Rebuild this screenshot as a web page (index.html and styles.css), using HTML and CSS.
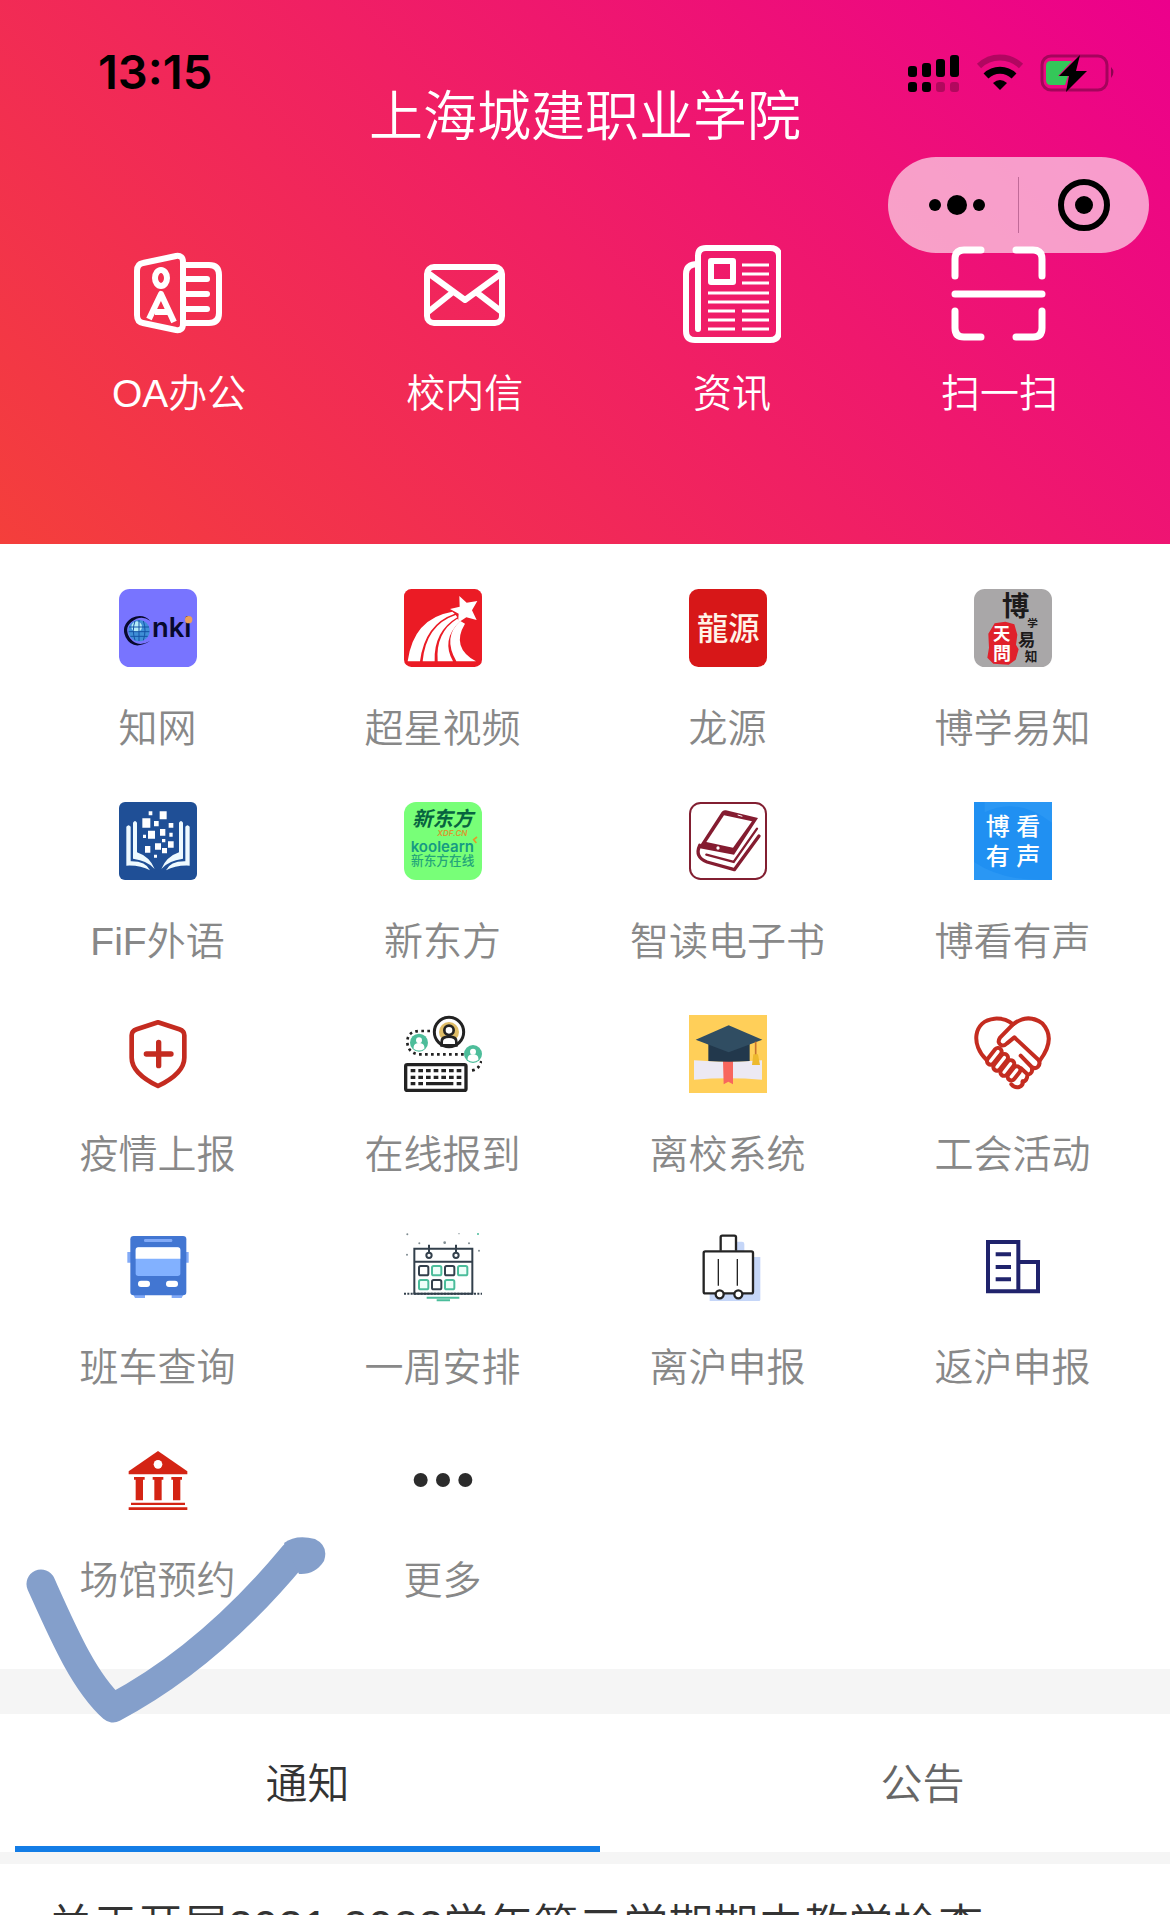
FILE: index.html
```html
<!DOCTYPE html>
<html lang="zh-CN">
<head>
    <meta charset="utf-8">
    <meta name="viewport" content="width=device-width, initial-scale=1">
    <title>上海城建职业学院</title>
    <link rel="stylesheet" href="styles.css">
</head>
<body>
    <header class="header">
        <div class="status-bar">
            <span class="time">13:15</span>
            <div class="status-icons">
                <svg width="52" height="38" viewBox="0 0 52 38">
                    <rect x="0" y="12" width="9" height="11" rx="3"/>
                    <rect x="14" y="9" width="9" height="14" rx="3"/>
                    <rect x="28" y="5" width="9" height="18" rx="3"/>
                    <rect x="42" y="1" width="9" height="22" rx="3"/>
                    <rect x="0" y="28" width="9" height="10" rx="3"/>
                    <rect x="14" y="28" width="9" height="10" rx="3"/>
                    <rect x="28" y="28" width="9" height="10" rx="3" opacity=".25"/>
                    <rect x="42" y="28" width="9" height="10" rx="3" opacity=".25"/>
                </svg>
                <svg width="48" height="38" viewBox="0 0 48 38">
                    <path d="M3 12a30 30 0 0 1 42 0" fill="none" stroke="#000" stroke-width="6" opacity=".25"/>
                    <path d="M10 22a20 20 0 0 1 28 0" fill="none" stroke="#000" stroke-width="7"/>
                    <path d="M24 36l-7-7q7-6 14 0z"/>
                </svg>
                <svg width="76" height="38" viewBox="0 0 76 38">
                    <rect x="2" y="2" width="65" height="34" rx="9" fill="none" stroke="#000" stroke-width="3" opacity=".3"/>
                    <path d="M71 13q5 5 0 11z" opacity=".4"/>
                    <path d="M11 7h21L18 22h10l-3 9H11q-5 0-5-5V12q0-5 5-5z" fill="#34c759"/>
                    <path d="M40 1L19 22h10l-3 16L47 17H36z"/>
                </svg>
            </div>
        </div>
        <h1 class="title">上海城建职业学院</h1>
        <div class="capsule">
            <button type="button" aria-label="更多操作">
                <svg width="66" height="54" viewBox="0 0 66 54">
                    <circle cx="15" cy="27" r="6"/>
                    <circle cx="37" cy="27" r="10"/>
                    <circle cx="59" cy="27" r="6"/>
                </svg>
            </button>
            <button type="button" aria-label="关闭">
                <svg width="54" height="54" viewBox="0 0 54 54">
                    <circle cx="27" cy="27" r="23" fill="none" stroke="#000" stroke-width="6"/>
                    <circle cx="27" cy="27" r="9"/>
                </svg>
            </button>
        </div>
        <nav class="quick">
            <a href="#oa">
                <svg class="line-icon" viewBox="0 0 98 98">
                    <path d="M13 18l33-7q7-1 7 6v62q0 7-7 6l-33-7q-6-1-6-8V26q0-7 6-8z"/>
                    <path d="M54 20h25q10 0 10 10v38q0 10-10 10H54M56 34h21M56 49h21M56 64h21" stroke-linecap="round"/>
                    <ellipse cx="31" cy="33" rx="6" ry="8"/>
                    <path d="M19 74l12-25 13 28M25 67h14"/>
                </svg>
                <span>OA办公</span>
            </a>
            <a href="#mail">
                <svg class="line-icon" viewBox="0 0 98 98">
                    <rect x="11" y="22" width="75" height="56" rx="7"/>
                    <path d="M12 28l37 27 37-27M12 67l25-20M86 67L60 47"/>
                </svg>
                <span>校内信</span>
            </a>
            <a href="#news">
                <svg class="line-icon" viewBox="0 0 98 98">
                    <path d="M15 84V11q0-8 8-8h64q9 0 9 8v75q0 9-9 9H12q-9 0-9-9V29q0-10 12-10" stroke-linecap="round"/>
                    <rect x="28" y="16" width="22" height="21"/>
                    <path d="M59 20h27M59 29h27M59 38h27M25 48h61M25 57h61M25 66h27M59 66h27M25 75h27M59 75h27M25 84h27M59 84h27" stroke-width="3"/>
                </svg>
                <span>资讯</span>
            </a>
            <a href="#scan">
                <svg class="line-icon" viewBox="0 0 98 98">
                    <path d="M5 31V14Q5 5 14 5h17M66 5h17q9 0 9 9v17M5 66v17q0 9 9 9h17M66 92h17q9 0 9-9V66M5 49h87" stroke-width="7" stroke-linecap="round"/>
                </svg>
                <span>扫一扫</span>
            </a>
        </nav>
    </header>

    <main>
        <div class="grid">
            <a href="#cnki">
                <svg viewBox="0 0 234 234">
                    <rect width="234" height="234" rx="32" fill="#7874ff"/>
                    <circle cx="60" cy="125" r="32" fill="#3f8fd6"/>
                    <circle cx="53" cy="113" r="16" fill="#b5ecf8"/>
                    <path d="M30 114h60M29 128h62M34 142h52M48 96q-10 28 0 58M60 93v63M73 96q10 28 0 58" stroke="#1553a5" stroke-width="3" fill="none"/>
                    <path d="M94 96Q72 72 38 87 4 110 20 145 42 187 93 156 56 177 33 148 14 118 37 99 66 75 94 96z" fill="#07092d"/>
                    <text x="99" y="143" class="latin" font-size="82" fill="#07092d">nki</text>
                    <circle cx="209" cy="92" r="11" fill="#eba05a"/>
                </svg>
                <span>知网</span>
            </a>
            <a href="#chaoxing">
                <svg viewBox="0 0 234 234">
                    <rect width="234" height="234" rx="22" fill="#eb1b25"/>
                    <g fill="#fff">
                        <path d="M166 21l22 20 32-5-16 28 14 29-31-8-25 16 2-27-26-14 29-7z"/>
                        <path d="M11 217Q28 88 145 68l7 6Q62 105 48 217z"/>
                        <path d="M56 217Q66 108 155 78l5 7Q88 128 92 217z"/>
                        <path d="M101 217Q94 130 160 89l7 9Q111 152 147 217z"/>
                        <path d="M157 217Q115 144 169 96l14 8Q140 175 216 217z"/>
                    </g>
                </svg>
                <span>超星视频</span>
            </a>
            <a href="#longyuan">
                <svg viewBox="0 0 234 234">
                    <rect width="234" height="234" rx="28" fill="#d71718"/>
                    <text x="118" y="153" font-size="94" font-weight="500" text-anchor="middle" fill="#fff3e8">龍源</text>
                </svg>
                <span>龙源</span>
            </a>
            <a href="#boxue">
                <svg viewBox="0 0 234 234">
                    <rect width="234" height="234" rx="32" fill="#a9a7a8"/>
                    <path d="M62 103l32-5 27 8 9 31-4 30 8 14-9 31-21 15-46-3-18-18 5-30-2-42z" fill="#e0202b"/>
                    <text x="57" y="152" font-size="52" font-weight="700" fill="#fff">天</text>
                    <text x="57" y="213" font-size="54" font-weight="700" fill="#fff">問</text>
                    <g fill="#1c1a1b" font-weight="700">
                        <text x="84" y="82" font-size="82">博</text>
                        <text x="160" y="115" font-size="32">学</text>
                        <text x="132" y="172" font-size="52">易</text>
                        <text x="152" y="216" font-size="38">知</text>
                    </g>
                </svg>
                <span>博学易知</span>
            </a>

            <a href="#fif">
                <svg viewBox="0 0 234 234">
                    <rect width="234" height="234" rx="18" fill="#1f4f96"/>
                    <path d="M89 28h11v12H89zM122 28h21v24h-21zM70 49h24v28H70zM105 57h14v16h-14zM149 63h14v14h-14zM87 86h21v24H87zM123 81h16v20h-16zM72 98h9v10h-9zM151 92h10v12h-10zM129 111h10v10h-10zM78 132h16v20H78zM108 124h18v19h-18zM147 118h17v19h-17zM129 138h15v16h-15zM105 158h9v9h-9z" fill="#fff"/>
                    <g fill="#eefaff">
                        <path d="M22 74q7-9 13 0v104q45-1 58 27-29-16-71-14z"/>
                        <path d="M42 62q6-10 12 0v89q38 13 53 50-20-25-65-31z"/>
                        <path d="M212 74q-7-9-13 0v104q-45-1-58 27 29-16 71-14z"/>
                        <path d="M192 62q-6-10-12 0v89q-38 13-53 50 20-25 65-31z"/>
                    </g>
                </svg>
                <span>FiF外语</span>
            </a>
            <a href="#xdf">
                <svg viewBox="0 0 234 234">
                    <rect width="234" height="234" rx="36" fill="#78ff78"/>
                    <text x="116" y="73" font-size="61" font-weight="700" font-style="italic" text-anchor="middle" fill="#07633f">新东方</text>
                    <text x="145" y="101" class="latin" font-size="24" font-style="italic" text-anchor="middle" fill="#d89a2e">XDF.CN</text>
                    <text x="20" y="149" class="latin" font-size="45" fill="#159a83">koolearn</text>
                    <path d="M219 105l-10 8 8 10" fill="none" stroke="#e59a28" stroke-width="5"/>
                    <text x="116" y="190" font-size="38" font-weight="500" text-anchor="middle" fill="#24a579">新东方在线</text>
                </svg>
                <span>新东方</span>
            </a>
            <a href="#ebook">
                <svg viewBox="0 0 234 234">
                    <rect x="3" y="3" width="228" height="228" rx="32" fill="#fff" stroke="#821f31" stroke-width="6"/>
                    <path d="M98 30q5-7 13-5l96 23-72 110-107-20z" fill="#841c30"/>
                    <path d="M105 40l84 18-57 79-80-17z" fill="#fff"/>
                    <path d="M32 130q-16 35 22 50l82 23 74-101" fill="none" stroke="#841c30" stroke-width="10" stroke-linecap="round" stroke-linejoin="round"/>
                    <path d="M204 80l-70 100-82-22" fill="none" stroke="#841c30" stroke-width="7" stroke-linecap="round"/>
                    <path d="M146 39l14 4" stroke="#fff" stroke-width="3"/>
                    <circle cx="87" cy="138" r="5" fill="#fff"/>
                </svg>
                <span>智读电子书</span>
            </a>
            <a href="#bokan">
                <svg viewBox="0 0 234 234">
                    <path d="M0 0h234v234H0z" fill="#2090f2"/>
                    <path d="M32 0h202v62Q126-18 32 31zM0 180q80 54 200 54H0z" fill="#2a97f4"/>
                    <g fill="#fff" font-size="72" font-weight="500">
                        <text x="35" y="98">博</text>
                        <text x="127" y="98">看</text>
                        <text x="35" y="190">有</text>
                        <text x="127" y="190">声</text>
                    </g>
                </svg>
                <span>博看有声</span>
            </a>

            <a href="#health">
                <svg viewBox="0 0 234 234">
                    <g fill="none" stroke="#c42b20" stroke-width="14" stroke-linecap="round" stroke-linejoin="round">
                        <path d="M117 22l-64 21q-15 5-15 18v67c0 38 38 65 79 85 41-20 79-47 79-85V61q0-13-15-18z"/>
                        <path d="M119 82v70M82 117h74" stroke-width="16"/>
                    </g>
                </svg>
                <span>疫情上报</span>
            </a>
            <a href="#checkin">
                <svg viewBox="0 0 234 234">
                    <path d="M78 48H45Q10 50 10 80t30 38h140M204 166q22-3 28-28" fill="none" stroke="#222" stroke-width="8" stroke-dasharray="8 10"/>
                    <circle cx="135" cy="51" r="30" fill="#dfbd67"/>
                    <circle cx="135" cy="51" r="44" fill="none" stroke="#222" stroke-width="9"/>
                    <circle cx="135" cy="46" r="14" fill="#fff" stroke="#222" stroke-width="8"/>
                    <path d="M113 91V80q0-15 22-15t22 15v11z" fill="#fff" stroke="#222" stroke-width="8"/>
                    <g fill="#4dbd9a">
                        <circle cx="45" cy="83" r="27"/>
                        <circle cx="207" cy="117" r="27"/>
                    </g>
                    <g fill="#fff">
                        <circle cx="45" cy="76" r="9"/>
                        <path d="M29 101V95q2-11 16-11t16 11v6q-16 11-32 0z"/>
                        <circle cx="207" cy="110" r="9"/>
                        <path d="M191 135v-6q2-11 16-11t16 11v6q-16 11-32 0z"/>
                    </g>
                    <rect x="5" y="149" width="181" height="77" rx="5" fill="#fff" stroke="#222" stroke-width="10"/>
                    <path d="M20 167h152M20 187h152" stroke="#222" stroke-width="10" stroke-dasharray="14 9"/>
                    <path d="M20 206h14M43 206h14M66 206h82M158 206h14" stroke="#222" stroke-width="10"/>
                </svg>
                <span>在线报到</span>
            </a>
            <a href="#leave">
                <svg viewBox="0 0 234 234">
                    <path d="M0 0h234v234H0z" fill="#ffcf59"/>
                    <path d="M15 136q102 8 204 0v58q-102-8-204 0z" fill="#ece9f3"/>
                    <path d="M102 138h30v70l-14-8-14 8z" fill="#f8665d"/>
                    <path d="M58 80h124v58q-62 4-124 0z" fill="#22384c"/>
                    <path d="M119 31l101 43-101 38L20 74z" fill="#304d62"/>
                    <path d="M200 80v40" stroke="#c8742e" stroke-width="5"/>
                    <path d="M193 118h14l6 32h-24z" fill="#edb92e"/>
                </svg>
                <span>离校系统</span>
            </a>
            <a href="#union">
                <svg viewBox="0 0 234 234">
                    <g fill="none" stroke="#c42c20" stroke-width="12" stroke-linecap="round" stroke-linejoin="round">
                        <path d="M38 135C-10 91-3 17 62 11q32-2 55 17 44-34 88-3 42 46-7 111"/>
                        <path d="M117 28L78 68q-10 16 5 23 8 2 16-6l22-18 72 67q8 12-2 22-8 7-18 0l-33-34M173 156q5 20-11 23l-22-20M160 181q0 16-14 20"/>
                        <rect x="50" y="95" width="22" height="58" rx="11" transform="rotate(38 61 124)"/>
                        <rect x="69" y="113" width="22" height="58" rx="11" transform="rotate(38 80 142)"/>
                        <rect x="89" y="132" width="22" height="54" rx="11" transform="rotate(38 100 159)"/>
                        <rect x="109" y="151" width="22" height="48" rx="11" transform="rotate(38 120 175)"/>
                        <path d="M112 208q10 12 24 8 12-5 10-17"/>
                    </g>
                </svg>
                <span>工会活动</span>
            </a>

            <a href="#bus">
                <svg viewBox="0 0 234 234">
                    <path d="M25 72h184v32H25zM42 198h36v12H48zM158 198h36l-6 12h-30z" fill="#82aaf7"/>
                    <rect x="34" y="24" width="168" height="178" rx="10" fill="#4276d2"/>
                    <rect x="50" y="58" width="134" height="86" rx="8" fill="#82b1ff"/>
                    <path d="M50 92V66q0-8 8-8h118q8 0 8 8v26z" fill="#fff"/>
                    <rect x="75" y="33" width="85" height="9" rx="4" fill="#82aaf7"/>
                    <rect x="57" y="158" width="36" height="19" rx="9" fill="#fff"/>
                    <rect x="141" y="158" width="36" height="19" rx="9" fill="#fff"/>
                </svg>
                <span>班车查询</span>
            </a>
            <a href="#week">
                <svg viewBox="0 0 234 234">
                    <g fill="none" stroke="#33404c" stroke-width="6">
                        <path d="M31 197V62h174v135M31 101h174"/>
                        <path d="M0 197h234" stroke-dasharray="6 4"/>
                        <path d="M28 197h180"/>
                        <circle cx="75" cy="82" r="8"/>
                        <circle cx="156" cy="82" r="8"/>
                        <path d="M75 50v24M156 50v24"/>
                        <rect x="45" y="114" width="28" height="28" rx="5"/>
                        <rect x="123" y="114" width="28" height="28" rx="5"/>
                        <rect x="84" y="156" width="28" height="28" rx="5"/>
                    </g>
                    <g fill="#edfff9" stroke="#4bbd9b" stroke-width="6">
                        <rect x="84" y="114" width="28" height="28" rx="5"/>
                        <rect x="162" y="114" width="28" height="28" rx="5"/>
                        <rect x="45" y="156" width="28" height="28" rx="5"/>
                        <rect x="123" y="156" width="28" height="28" rx="5"/>
                        <path d="M68 209h98M98 217h40"/>
                    </g>
                    <g fill="#7f8c91">
                        <circle cx="10" cy="19" r="3"/>
                        <circle cx="46" cy="46" r="3"/>
                        <circle cx="122" cy="44" r="4"/>
                        <circle cx="195" cy="46" r="3"/>
                        <circle cx="9" cy="80" r="3"/>
                        <circle cx="225" cy="68" r="3"/>
                        <circle cx="222" cy="18" r="3" fill="#4bbd9b"/>
                        <circle cx="165" cy="17" r="2"/>
                    </g>
                </svg>
                <span>一周安排</span>
            </a>
            <a href="#outgoing">
                <svg viewBox="0 0 234 234">
                    <path d="M62 87h152v128q0 4-4 4H62zM118 48q0-7 8-7h33q7 0 7 7v30h-48z" fill="#c5d6f8"/>
                    <g fill="#fff" stroke="#242424" stroke-width="7">
                        <path d="M95 68V28q0-5 5-5h36q5 0 5 5v40"/>
                        <rect x="44" y="70" width="148" height="126" rx="5"/>
                        <path d="M88 93v80M145 93v80" stroke-width="4"/>
                        <circle cx="92" cy="199" r="12"/>
                        <circle cx="148" cy="199" r="12"/>
                    </g>
                </svg>
                <span>离沪申报</span>
            </a>
            <a href="#return">
                <svg viewBox="0 0 234 234">
                    <path d="M42 42h91v148H42zM133 102h59v88h-59zM65 79h46M65 117h46M65 154h46" fill="none" stroke="#20236c" stroke-width="12"/>
                </svg>
                <span>返沪申报</span>
            </a>

            <a href="#venue" class="venue">
                <svg viewBox="0 0 234 234">
                    <g fill="#d42414">
                        <path d="M117 30l88 61v9H29v-9z"/>
                        <path d="M45 108h32v8h-5v62H50v-62h-5zM101 108h32v8h-5v62h-22v-62h-5zM157 108h32v8h-5v62h-22v-62h-5zM36 185h162v7H36zM29 199h176v8H29z"/>
                    </g>
                    <circle cx="117" cy="70" r="13" fill="#fff"/>
                </svg>
                <span>场馆预约</span>
                <!-- hand-drawn tick over the venue entry -->
                <svg class="tick" viewBox="0 0 310 200">
                    <path d="M20 49C42 98 63 147 92 173 160 137 220 84 273 20" fill="none" stroke="#849fcb" stroke-width="29" stroke-linecap="round" stroke-linejoin="round"/>
                    <path d="M263 8q12-9 31-4 14 7 9 22-9 14-25 13z" fill="#849fcb"/>
                </svg>
            </a>
            <a href="#more">
                <svg viewBox="0 0 234 234">
                    <g fill="#2c2c2c">
                        <circle cx="50" cy="117" r="21"/>
                        <circle cx="117" cy="117" r="21"/>
                        <circle cx="184" cy="117" r="21"/>
                    </g>
                </svg>
                <span>更多</span>
            </a>
        </div>

        <div class="tabs">
            <button type="button" class="tab active">通知</button>
            <button type="button" class="tab">公告</button>
        </div>
        <ul class="list">
            <li><a href="#notice">关于开展2021-2022学年第二学期期中教学检查</a></li>
        </ul>
    </main>
</body>
</html>
```
FILE: styles.css
```css
* {
    box-sizing: border-box;
}

body {
    margin: 0;
    height: 100vh;
    overflow: hidden;
    background-color: #fff;
    font-family: "Liberation Sans", "Noto Sans CJK SC", sans-serif;
    font-weight: 350;
}

a {
    color: inherit;
    text-decoration: none;
}

button {
    border: 0;
    padding: 0;
    background: none;
    font: inherit;
}

svg {
    display: block;
}

.latin {
    font-family: Inter, sans-serif;
    font-weight: 600;
}

/* header */
.header {
    position: relative;
    padding: 54px 0 119px;
    background-image: linear-gradient(45deg, #f43f3b, #ec008c);
    color: #fff;
}

.status-bar {
    display: flex;
    justify-content: space-between;
    height: 36px;
    padding: 0 54px 0 98px;
    color: #000;
}

.time {
    font-family: Inter, sans-serif;
    font-size: 47px;
    font-weight: 600;
    line-height: 36px;
}

.status-icons {
    display: flex;
    gap: 16px;
}

.title {
    margin: 0;
    font-size: 54px;
    font-weight: 350;
    line-height: 54px;
    text-align: center;
}

.capsule {
    position: absolute;
    top: 157px;
    right: 21px;
    display: flex;
    align-items: center;
    width: 261px;
    height: 96px;
    border-radius: 48px;
    background-color: rgba(255, 255, 255, .6);
}

.capsule button {
    flex: 1;
    display: flex;
    justify-content: center;
    align-items: center;
    height: 56px;
}

.capsule button + button {
    border-left: 1px solid #c06a98;
}

.quick {
    position: relative;
    display: flex;
    justify-content: space-around;
    padding: 101px 32px 0;
}

.quick a,
.grid a {
    display: flex;
    flex-direction: column;
    align-items: center;
    font-size: 39px;
    line-height: 62px;
}

.quick a {
    gap: 20px;
}

.line-icon {
    width: 98px;
    height: 98px;
    fill: none;
    stroke: #fff;
    stroke-width: 6;
    stroke-linejoin: round;
}

/* app grid */
.grid {
    display: grid;
    grid-template-columns: repeat(4, 1fr);
    grid-auto-rows: 213px;
    padding: 30px 15px;
    color: #888;
}

.grid a {
    gap: 31px;
    padding-top: 15px;
}

.grid svg {
    width: 78px;
    height: 78px;
}

.grid .venue {
    position: relative;
}

.grid .tick {
    position: absolute;
    top: 109px;
    left: 6px;
    width: 310px;
    height: 200px;
}

/* tabs */
.tabs {
    display: flex;
    overflow: hidden;
    border-top: 45px solid #f5f5f5;
    border-bottom: 12px solid #f5f5f5;
}

.tab {
    flex: none;
    width: 50%;
    height: 138px;
    margin: 0 15px;
    border-bottom: 6px solid transparent;
    color: #666;
    font-size: 42px;
}

.tab.active {
    border-color: #147de6;
    color: #333;
}

.list {
    margin: 0;
    padding: 30px 48px;
    list-style: none;
    color: #333;
    font-size: 45px;
    line-height: 66px;
    white-space: nowrap;
}
```
